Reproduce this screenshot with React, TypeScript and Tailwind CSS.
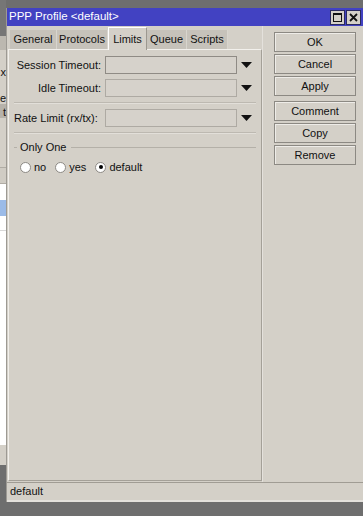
const tabs = [
  { label: "General", w: "w-[47px]" },
  { label: "Protocols", w: "w-[51px]" },
  { label: "Limits", w: "w-[39px]", active: true },
  { label: "Queue", w: "w-[40px]" },
  { label: "Scripts", w: "w-[41px]" },
];

function Arrow() {
  return (
    <svg width="11" height="6" viewBox="0 0 11 6" className="ml-[4px]">
      <path d="M0 0 L11 0 L5.5 6 Z" fill="#111" />
    </svg>
  );
}

function Field({ label, dark }: { label: string; dark?: boolean }) {
  return (
    <div className="flex items-center h-[18px]">
      <span className="w-[87px] text-right whitespace-nowrap">{label}</span>
      <div
        className={
          "ml-[4px] w-[132px] h-[18px] bg-[#d6d2cb] border " +
          (dark ? "border-[#8f8b85]" : "border-[#aeaaa3]")
        }
      />
      <Arrow />
    </div>
  );
}

function Separator() {
  return (
    <div className="flex flex-col">
      <div className="h-px bg-[#bdb9b1]" />
      <div className="h-px bg-[#e2dfd9]" />
    </div>
  );
}

function Radio({ label, checked }: { label: string; checked?: boolean }) {
  return (
    <div className="flex items-center">
      <div className="w-[11px] h-[11px] rounded-full bg-white border border-[#8d8a85] flex items-center justify-center">
        {checked && <div className="w-[4px] h-[4px] rounded-full bg-black" />}
      </div>
      <span className="ml-[3px]">{label}</span>
    </div>
  );
}

function Btn({ label }: { label: string }) {
  return (
    <div className="w-[82px] h-[20px] border border-[#8c8983] bg-[#d4d0c8] flex items-center justify-center shadow-[inset_1px_1px_0_#eeece8]">
      {label}
    </div>
  );
}

export default function App() {
  return (
    <div className="w-[363px] h-[516px] bg-[#6e6e6e] flex overflow-hidden font-['Liberation_Sans',Arial,sans-serif] text-[11px] text-[#111]">
      {/* app behind the dialog */}
      <div className="w-[6px] flex flex-col overflow-hidden">
        <div className="h-[36px] bg-[#767676]" />
        <div className="h-[14px] bg-[#bcb8b0]" />
        <div className="h-[14px] bg-[#d4d0c8]" />
        <div className="h-[14px] bg-[#d4d0c8] flex justify-end overflow-hidden">
          <span className="whitespace-nowrap">x</span>
        </div>
        <div className="h-[12px] bg-[#d4d0c8]" />
        <div className="h-[14px] bg-[#d4d0c8] flex justify-end overflow-hidden">
          <span className="whitespace-nowrap">ce</span>
        </div>
        <div className="h-[14px] bg-[#b6b2aa] flex justify-end overflow-hidden">
          <span className="whitespace-nowrap">t</span>
        </div>
        <div className="h-[50px] bg-[#d4d0c8] border-b border-[#b0aca4]" />
        <div className="h-[16px] bg-[#d0ccc4] border-b border-[#b0aca4]" />
        <div className="h-[16px] bg-white" />
        <div className="h-[16px] bg-[#9bbbe8]" />
        <div className="h-[15px] bg-white border-b border-[#d8d8d8]" />
        <div className="h-[214px] bg-white" />
        <div className="h-[20px] bg-[#d4d0c8]" />
        <div className="flex-1 bg-[#6e6e6e]" />
      </div>

      {/* dialog window */}
      <div className="mt-[8px] w-[357px] h-[494px] bg-[#d4d0c8] flex flex-col border-l border-[#9d9a94]">
        <div className="h-[18px] bg-[#4242c2] flex items-center pl-[2px] pr-[2px]">
          <span className="text-white text-[11.5px] whitespace-nowrap">PPP Profile &lt;default&gt;</span>
          <div className="ml-auto flex gap-[1px]">
            <div className="w-[15px] h-[15px] bg-[#d4d0c8] border border-[#2a2a60] flex items-center justify-center">
              <div className="w-[9px] h-[9px] border border-[#111] border-t-2" />
            </div>
            <div className="w-[15px] h-[15px] bg-[#d4d0c8] border border-[#2a2a60] flex items-center justify-center">
              <svg width="9" height="9" viewBox="0 0 9 9">
                <path d="M1 1 L8 8 M8 1 L1 8" stroke="#111" strokeWidth="1.8" />
              </svg>
            </div>
          </div>
        </div>

        <div className="flex-1 flex">
          {/* tabs + panel */}
          <div className="w-[255px] pl-[1px] pt-[1px] flex flex-col">
            <div className="h-[22px] flex items-end pl-[2px] relative z-10">
              {tabs.map((t) =>
                t.active ? (
                  <div
                    key={t.label}
                    className={t.w + " h-[23px] -mb-px bg-[#d4d0c8] border-t border-l border-r border-t-white border-l-white border-r-[#9c9890] flex items-center justify-center"}
                  >
                    {t.label}
                  </div>
                ) : (
                  <div
                    key={t.label}
                    className={t.w + " h-[19px] bg-[#c6c2ba] border-r border-[#d8d5ce] flex items-center justify-center"}
                  >
                    {t.label}
                  </div>
                )
              )}
            </div>
            <div className="h-[432px] border border-t-[#f2f0ec] border-l-[#f2f0ec] border-r-[#a4a098] border-b-[#a4a098] pl-[5px] pr-[5px] pt-[6px] flex flex-col">
              <Field label="Session Timeout:" dark />
              <div className="mt-[5px]">
                <Field label="Idle Timeout:" />
              </div>
              <div className="mt-[5px]">
                <Separator />
              </div>
              <div className="mt-[5px] flex items-center h-[18px]">
                <span className="w-[87px] whitespace-nowrap">Rate Limit (rx/tx):</span>
                <div className="ml-[4px] w-[132px] h-[18px] bg-[#d6d2cb] border border-[#aeaaa3]" />
                <Arrow />
              </div>
              <div className="mt-[5px]">
                <Separator />
              </div>
              <div className="mt-[6px] h-[14px] flex items-center">
                <div className="w-[3px] h-px bg-[#b4b0a8]" />
                <span className="ml-[3px] whitespace-nowrap">Only One</span>
                <div className="ml-[5px] flex-1 h-px bg-[#b4b0a8]" />
              </div>
              <div className="mt-[6px] h-[14px] flex items-center gap-[9px] pl-[6px]">
                <Radio label="no" />
                <Radio label="yes" />
                <Radio label="default" checked />
              </div>
            </div>
          </div>

          {/* buttons */}
          <div className="flex-1 flex flex-col pl-[11px] pt-[6px] gap-[2px] border-l border-[#e4e1dc]">
            <Btn label="OK" />
            <Btn label="Cancel" />
            <Btn label="Apply" />
            <div className="mt-[1px]" />
            <Btn label="Comment" />
            <Btn label="Copy" />
            <Btn label="Remove" />
          </div>
        </div>

        <div className="h-[20px] border-t border-[#a09c94] flex items-center pl-[3px] border-b-2 border-b-[#e4e1dc]">
          default
        </div>
      </div>
    </div>
  );
}
